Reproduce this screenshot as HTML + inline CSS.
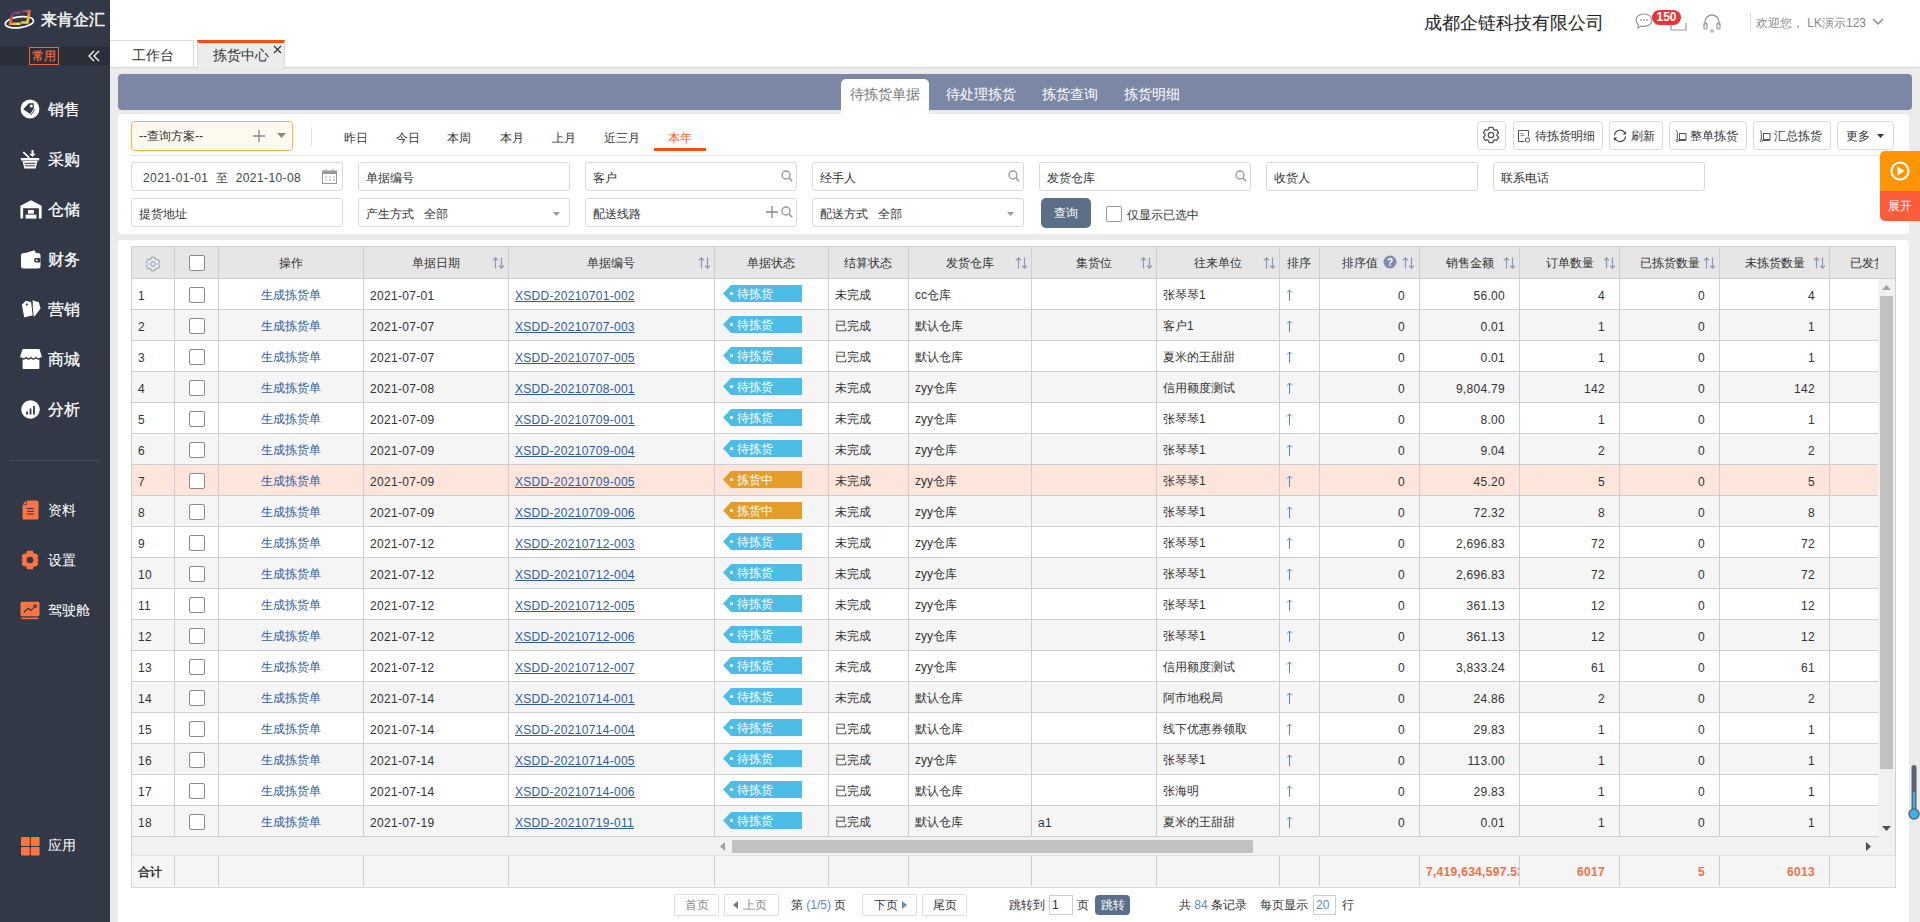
<!DOCTYPE html>
<html><head><meta charset="utf-8"><style>
*{box-sizing:border-box;margin:0;padding:0}
html,body{width:1920px;height:922px;overflow:hidden;background:#ebebeb;font-family:"Liberation Sans",sans-serif;font-size:12px;color:#333}
.a{position:absolute}
#side{position:absolute;left:0;top:0;width:110px;height:922px;background:#323846}
#top{position:absolute;left:110px;top:0;width:1810px;height:40px;background:#fff}
#tabs{position:absolute;left:110px;top:40px;width:1810px;height:28px;background:#fff;border-bottom:1px solid #d4d4d4}
.mi{position:absolute;left:0;width:110px;color:#fff;font-size:16px;-webkit-text-stroke:0.25px #fff}
.mi svg{position:absolute}
.mi span{position:absolute;left:48px}
.mi2{position:absolute;left:0;width:110px;color:#fff;font-size:14px}
.mi2 span{position:absolute;left:48px}
.inp{position:absolute;height:29px;width:212px;border:1px solid #d9d9d9;border-radius:3px;background:#fff;font-size:12px;color:#333;line-height:30px;padding-left:7px;white-space:nowrap}
.btn{position:absolute;top:121px;height:29px;border:1px solid #d9d9d9;border-radius:4px;background:#fff;font-size:12px;line-height:29px;color:#333;white-space:nowrap}
.dt{position:absolute;top:130px;font-size:12px;color:#333}
.cell{position:absolute;overflow:hidden;white-space:nowrap}
.L{letter-spacing:0.3px}
.hl{position:absolute;background:#d6d6d6}
.si{position:absolute}
.badge{position:absolute;height:16px;color:#fff;font-size:12px;line-height:16px}
</style></head><body>

<div id="side">
<div class="a" style="left:41px;top:10px;color:#eee;font-size:16px;font-weight:bold;white-space:nowrap">来肯企汇</div>
<svg class="a" style="left:0;top:0" width="40" height="40" viewBox="0 0 40 40"><defs><linearGradient id="g1" x1="0" y1="0" x2="0.6" y2="1"><stop offset="0" stop-color="#3b2c8c"/><stop offset="0.65" stop-color="#f06a3c"/><stop offset="1" stop-color="#f7d82c"/></linearGradient><linearGradient id="g2" x1="0" y1="0" x2="0.5" y2="1"><stop offset="0" stop-color="#3b2c8c"/><stop offset="0.45" stop-color="#f26d3a"/><stop offset="1" stop-color="#f7cf2c"/></linearGradient></defs><ellipse cx="19.4" cy="22.3" rx="14.2" ry="5.4" fill="none" stroke="#fff" stroke-width="1.7" transform="rotate(-7 19.4 22.3)"/><path d="M19.8 12.6H12.6L10.2 23.8H20.6" fill="none" stroke="url(#g1)" stroke-width="2.6"/><path d="M19.4 11H29.4L27.4 22.5H21" fill="none" stroke="url(#g2)" stroke-width="2.6"/></svg>
<div class="a" style="left:0;top:47px;width:110px;height:18px;background:#2a2f3a"></div>
<div class="a" style="left:29px;top:47px;width:30px;height:18px;border:1px solid #f0643c;color:#f86a3c;font-size:12px;line-height:16px;text-align:center;-webkit-text-stroke:0.2px #f86a3c">常用</div>
<svg class="a" style="left:88px;top:50px" width="12" height="12" viewBox="0 0 12 12"><path d="M6 1L1 6l5 5M11 1L6 6l5 5" stroke="#fff" stroke-width="1.3" fill="none"/></svg>
<div class="mi" style="top:99px;height:22px"><span style="top:0;line-height:22px">销售</span></div>
<div class="mi" style="top:149px;height:22px"><span style="top:0;line-height:22px">采购</span></div>
<div class="mi" style="top:199px;height:22px"><span style="top:0;line-height:22px">仓储</span></div>
<div class="mi" style="top:249px;height:22px"><span style="top:0;line-height:22px">财务</span></div>
<div class="mi" style="top:299px;height:22px"><span style="top:0;line-height:22px">营销</span></div>
<div class="mi" style="top:349px;height:22px"><span style="top:0;line-height:22px">商城</span></div>
<div class="mi" style="top:399px;height:22px"><span style="top:0;line-height:22px">分析</span></div>
<svg class="a" style="left:20px;top:99px" width="20" height="20" viewBox="0 0 20 20"><circle cx="10" cy="10" r="9.4" fill="#fff"/><path d="M3.2 10.2L8.9 4.2H13.6L13.9 9.5L10.2 14.9z" fill="#323846"/><circle cx="11.3" cy="6.9" r="1.5" fill="#fff"/><path d="M14.9 10.4L11 16" stroke="#323846" stroke-width="0.9"/></svg>
<svg class="a" style="left:20px;top:150px" width="20" height="19" viewBox="0 0 20 19"><path d="M12.5 0v4.5" stroke="#fff" stroke-width="2"/><path d="M9.3 3.8h6.4L12.5 7z" fill="#fff"/><path d="M3.3 2.2L9.3 7.8" stroke="#fff" stroke-width="1.8"/><rect x="0.8" y="8" width="18.4" height="2.4" rx=".6" fill="#fff"/><path d="M2.5 11H17.5L15.6 18.4H4.4z" fill="#fff"/><path d="M4.5 13.3h11M5 15.8h10" stroke="#323846" stroke-width="1"/></svg>
<svg class="a" style="left:20px;top:200px" width="22" height="19" viewBox="0 0 22 19"><path d="M11 .3L21.6 5.8V18.6H18.9V8.2H3.1V18.6H.4V5.8z" fill="#fff"/><rect x="8" y="10" width="6" height="3.6" fill="#fff"/><rect x="5.6" y="14.6" width="10.8" height="4" fill="#fff"/></svg>
<svg class="a" style="left:21px;top:250px" width="20" height="19" viewBox="0 0 20 19"><path d="M3.5 3.2L13.5 .3 15 3.2z" fill="#fff"/><rect x="0" y="3" width="19.5" height="15.5" rx="2.5" fill="#fff"/><rect x="13.2" y="8" width="6.3" height="4.6" rx="1.5" fill="#323846"/><circle cx="15.6" cy="10.3" r="1" fill="#fff"/></svg>
<svg class="a" style="left:21px;top:299px" width="20" height="20" viewBox="0 0 20 20"><path d="M11.5 1.2L17.8 3.2 19.6 9.4 13.4 17.6 10.6 16.6 11.8 3z" fill="#fff"/><path d="M4.6 1.4L10.6 2.6 12.2 16.8 2.8 19 .4 5.8z" fill="#fff" stroke="#323846" stroke-width="1"/><circle cx="5.8" cy="5.6" r="1.1" fill="#323846"/></svg>
<svg class="a" style="left:20px;top:349px" width="22" height="20" viewBox="0 0 22 20"><path d="M2.6 0H19.4L21.6 6.8V9H.4V6.8z" fill="#fff"/><rect x="2.6" y="9" width="16.8" height="11" rx="1" fill="#fff"/><path d="M.8 8.6Q3.5 11.4 6.2 8.6Q8.6 11.4 11 8.6Q13.4 11.4 15.8 8.6Q18.5 11.4 21.2 8.6" fill="none" stroke="#323846" stroke-width="1.4"/></svg>
<svg class="a" style="left:21px;top:400px" width="19" height="19" viewBox="0 0 19 19"><circle cx="9.5" cy="9.5" r="9.3" fill="#fff"/><path d="M6 14.6V11.6M9.5 14.6V8.6M13 14.6V6" stroke="#323846" stroke-width="1.8"/></svg>
<div class="a" style="left:10px;top:460px;width:90px;height:1px;background:#454c5a"></div>
<div class="mi2" style="top:500px;height:20px"><span style="top:0;line-height:20px">资料</span></div>
<div class="mi2" style="top:550px;height:20px"><span style="top:0;line-height:20px">设置</span></div>
<div class="mi2" style="top:600px;height:20px"><span style="top:0;line-height:20px">驾驶舱</span></div>
<svg class="a" style="left:22px;top:500px" width="17" height="20" viewBox="0 0 17 20"><path d="M4.5 .5H15A1.5 1.5 0 0 1 16.5 2V18A1.5 1.5 0 0 1 15 19.5H2A1.5 1.5 0 0 1 .5 18V4.5z" fill="#fd7443"/><path d="M4.6 .3V4.6H.3" fill="none" stroke="#323846" stroke-width=".8"/><path d="M5 8.5h7M5 11.3h7M5 14h7" stroke="#323846" stroke-width="1"/></svg>
<svg class="a" style="left:20px;top:550px" width="20" height="20" viewBox="0 0 20 20"><path d="M7.2 .8h5.6l1 2.6 2.7.4 1.9 2.2-1 2.6L19 10l-1.6 1.4 1 2.6-1.9 2.2-2.7.4-1 2.6H7.2l-1-2.6-2.7-.4-1.9-2.2 1-2.6L1 10l1.6-1.4-1-2.6 1.9-2.2 2.7-.4z" fill="#fd7443"/><circle cx="10" cy="10" r="3.3" fill="#323846"/></svg>
<svg class="a" style="left:20px;top:601px" width="20" height="19" viewBox="0 0 20 19"><rect x=".5" y=".8" width="19" height="14.4" rx="1.5" fill="#fd7443"/><path d="M3.8 11.2l4.4-4 2.6 2.2 4.6-4.6" fill="none" stroke="#323846" stroke-width="1.2"/><path d="M13.4 4.4h2.6V7" fill="none" stroke="#323846" stroke-width="1.2"/><rect x="1.5" y="16.6" width="17" height="1.6" fill="#fd7443"/></svg>
<div class="mi2" style="top:835px;height:20px"><span style="top:0;line-height:20px">应用</span></div>
<svg class="a" style="left:21px;top:837px" width="19" height="19" viewBox="0 0 19 19"><rect x="0" y="0" width="8.8" height="9" rx="1" fill="#fd7443"/><rect x="9.8" y="0" width="8.8" height="9" rx="1" fill="#fd7443"/><rect x="0" y="10" width="8.8" height="8.4" rx="1" fill="#fd7443"/><rect x="9.8" y="10" width="8.8" height="8.4" rx="1" fill="#fd7443"/></svg>
</div>
<div id="top"></div>
<div class="a" style="left:1424px;top:11px;font-size:18px;color:#222">成都企链科技有限公司</div>
<svg class="a" style="left:1635px;top:13px" width="18" height="16" viewBox="0 0 18 16"><path d="M9 1C4.5 1 1 3.8 1 7.2c0 1.8 1 3.4 2.5 4.5L3 15l3.5-2c.8.2 1.6.3 2.5.3 4.5 0 8-2.8 8-6.1S13.5 1 9 1z" fill="none" stroke="#999" stroke-width="1.2"/><circle cx="6" cy="7" r=".9" fill="#999"/><circle cx="9" cy="7" r=".9" fill="#999"/><circle cx="12" cy="7" r=".9" fill="#999"/></svg>
<svg class="a" style="left:1670px;top:17px" width="17" height="14" viewBox="0 0 17 14"><path d="M1 6v7h15V6" fill="none" stroke="#999" stroke-width="1.2"/></svg>
<div class="a" style="left:1652px;top:10px;width:29px;height:15px;border-radius:8px;background:#e8333a;color:#fff;font-size:12px;font-weight:bold;line-height:15px;text-align:center">150</div>
<svg class="a" style="left:1702px;top:13px" width="20" height="20" viewBox="0 0 20 20"><path d="M3 12V9a7 7 0 0 1 14 0v3" fill="none" stroke="#999" stroke-width="1.3"/><rect x="2" y="10" width="3" height="6" rx="1" fill="none" stroke="#999" stroke-width="1.2"/><rect x="15" y="10" width="3" height="6" rx="1" fill="none" stroke="#999" stroke-width="1.2"/><circle cx="10" cy="18" r="1.3" fill="none" stroke="#999"/></svg>
<div class="a" style="left:1750px;top:13px;width:1px;height:18px;background:#ddd"></div>
<div class="a" style="left:1756px;top:15px;font-size:12px;color:#888;white-space:nowrap">欢迎您，&nbsp;LK演示123</div>
<svg class="a" style="left:1872px;top:18px" width="12" height="8" viewBox="0 0 12 8"><path d="M1 1l5 5 5-5" stroke="#888" stroke-width="1.5" fill="none"/></svg>
<div id="tabs"></div>
<div class="a" style="left:110px;top:40px;width:84px;height:27px;background:#fff;border:1px solid #dcdcdc;border-left:none;border-bottom:none;font-size:14px;color:#333;text-align:center;line-height:29px;padding-left:2px">工作台</div>
<div class="a" style="left:197px;top:40px;width:88px;height:29px;background:#ececec;border-top:3px solid #fe4c16;border-right:1px solid #dcdcdc;border-left:1px solid #dcdcdc;font-size:14px;color:#333;line-height:25px;padding-left:15px">拣货中心</div>
<svg class="a" style="left:273px;top:45px" width="9" height="9" viewBox="0 0 9 9"><path d="M1 1l7 7M8 1L1 8" stroke="#333" stroke-width="1.2"/></svg>
<div class="a" style="left:118px;top:74px;width:1794px;height:36px;background:#7c87a5;border-radius:4px"></div>
<div class="a" style="left:841px;top:79px;width:88px;height:35px;background:#fff;border-radius:5px 5px 0 0;color:#777;font-size:14px;line-height:31px;text-align:center">待拣货单据</div>
<div class="a" style="left:946px;top:79px;color:#fff;font-size:14px;line-height:31px">待处理拣货</div>
<div class="a" style="left:1042px;top:79px;color:#fff;font-size:14px;line-height:31px">拣货查询</div>
<div class="a" style="left:1124px;top:79px;color:#fff;font-size:14px;line-height:31px">拣货明细</div>
<div class="a" style="left:118px;top:114px;width:1791px;height:120px;background:#fff;border-radius:4px"></div>
<div class="a" style="left:131px;top:121px;width:162px;height:30px;background:#fffaf0;border:1px solid #f6b24f;border-radius:4px;font-size:12px;color:#333;line-height:28px;padding-left:7px">--查询方案--</div>
<svg class="a" style="left:253px;top:130px" width="12" height="12" viewBox="0 0 12 12"><path d="M6 0v12M0 6h12" stroke="#888" stroke-width="1.3"/></svg>
<svg class="a" style="left:277px;top:133px" width="9" height="5" viewBox="0 0 9 5"><path d="M0 0h9L4.5 5z" fill="#888"/></svg>
<div class="a" style="left:311px;top:127px;width:1px;height:19px;background:#e3e3e3"></div>
<div class="a" style="left:131px;top:155px;width:1764px;height:1px;background:#e8e8e8"></div>
<div class="dt" style="left:344px">昨日</div>
<div class="dt" style="left:396px">今日</div>
<div class="dt" style="left:447px">本周</div>
<div class="dt" style="left:500px">本月</div>
<div class="dt" style="left:552px">上月</div>
<div class="dt" style="left:604px">近三月</div>
<div class="dt" style="left:668px;color:#fe5a25">本年</div>
<div class="a" style="left:654px;top:148px;width:52px;height:3px;background:#fe4c16"></div>
<div class="btn" style="left:1477px;width:29px"></div>
<svg class="a" style="left:1482px;top:126px" width="18" height="18" viewBox="0 0 24 24"><path d="M8.75 4.69 L9.46 1.81 L14.54 1.81 L15.25 4.69 L16.70 5.53 L19.55 4.71 L22.09 9.11 L19.96 11.16 L19.96 12.84 L22.09 14.89 L19.55 19.29 L16.70 18.47 L15.25 19.31 L14.54 22.19 L9.46 22.19 L8.75 19.31 L7.30 18.47 L4.45 19.29 L1.91 14.89 L4.04 12.84 L4.04 11.16 L1.91 9.11 L4.45 4.71 L7.30 5.53Z" fill="none" stroke="#555" stroke-width="1.7" stroke-linejoin="round"/><circle cx="12" cy="12" r="3.6" fill="none" stroke="#555" stroke-width="1.7"/></svg>
<div class="btn" style="left:1513px;width:90px;padding-left:21px">待拣货明细</div>
<svg class="a" style="left:1517px;top:129px" width="14" height="14" viewBox="0 0 14 14"><path d="M7.5 12.5H1.5V1.5h10v6" fill="none" stroke="#555" stroke-width="1"/><path d="M3.5 4.5h3M3.5 6.5h4" stroke="#777" stroke-width=".9"/><circle cx="10.5" cy="11" r="2.2" fill="none" stroke="#555" stroke-width="1"/></svg>
<div class="btn" style="left:1609px;width:54px;padding-left:21px">刷新</div>
<svg class="a" style="left:1613px;top:129px" width="14" height="14" viewBox="0 0 14 14"><path d="M1.5 6.6A5.6 5.6 0 0 1 11.8 3.8M12.5 7.2A5.6 5.6 0 0 1 2.2 10" fill="none" stroke="#444" stroke-width="1.15"/><path d="M13.1 1.9V5.4H9.6z M.9 12.1V8.6H4.4z" fill="#444"/></svg>
<div class="btn" style="left:1669px;width:78px;padding-left:20px">整单拣货</div>
<svg class="a" style="left:1675px;top:129px" width="13" height="13" viewBox="0 0 13 13"><path d="M.8 1.2Q2.3 2 2.3 3.5V11.5h8.5" fill="none" stroke="#555" stroke-width="1"/><circle cx="2.3" cy="11.6" r="1.1" fill="#fff" stroke="#555" stroke-width=".9"/><rect x="4.5" y="4.5" width="6.5" height="6" fill="none" stroke="#555" stroke-width="1"/></svg>
<div class="btn" style="left:1753px;width:78px;padding-left:20px">汇总拣货</div>
<svg class="a" style="left:1759px;top:129px" width="13" height="13" viewBox="0 0 13 13"><path d="M.8 1.2Q2.3 2 2.3 3.5V11.5h8.5" fill="none" stroke="#555" stroke-width="1"/><circle cx="2.3" cy="11.6" r="1.1" fill="#fff" stroke="#555" stroke-width=".9"/><rect x="4.5" y="4.5" width="6.5" height="6" fill="none" stroke="#555" stroke-width="1"/></svg>
<div class="btn" style="left:1837px;width:57px;padding-left:8px">更多</div>
<svg class="a" style="left:1877px;top:134px" width="7" height="4" viewBox="0 0 7 4"><path d="M0 0h7L3.5 4z" fill="#333"/></svg>
<div class="inp" style="left:131px;top:162px;padding-left:11px;color:#444;letter-spacing:0.4px">2021-01-01&nbsp; 至&nbsp; 2021-10-08</div>
<svg class="a" style="left:322px;top:169px" width="15" height="15" viewBox="0 0 15 15"><rect x=".5" y="2" width="14" height="12.5" fill="none" stroke="#999"/><rect x=".5" y="2" width="14" height="3" fill="#999"/><path d="M4 0v3M11 0v3" stroke="#999"/><path d="M3 8h2M7 8h2M11 8h2M3 11h2M7 11h2M11 11h2" stroke="#aaa"/></svg>
<div class="inp" style="left:358px;top:162px">单据编号</div>
<div class="inp" style="left:585px;top:162px">客户</div>
<svg class="a" style="left:781px;top:170px" width="12" height="12" viewBox="0 0 12 12"><circle cx="5" cy="5" r="4" fill="none" stroke="#999" stroke-width="1.4"/><path d="M8 8l3.2 3.2" stroke="#999" stroke-width="1.6"/></svg>
<div class="inp" style="left:812px;top:162px">经手人</div>
<svg class="a" style="left:1008px;top:170px" width="12" height="12" viewBox="0 0 12 12"><circle cx="5" cy="5" r="4" fill="none" stroke="#999" stroke-width="1.4"/><path d="M8 8l3.2 3.2" stroke="#999" stroke-width="1.6"/></svg>
<div class="inp" style="left:1039px;top:162px">发货仓库</div>
<svg class="a" style="left:1235px;top:170px" width="12" height="12" viewBox="0 0 12 12"><circle cx="5" cy="5" r="4" fill="none" stroke="#999" stroke-width="1.4"/><path d="M8 8l3.2 3.2" stroke="#999" stroke-width="1.6"/></svg>
<div class="inp" style="left:1266px;top:162px">收货人</div>
<div class="inp" style="left:1493px;top:162px">联系电话</div>
<div class="inp" style="left:131px;top:198px">提货地址</div>
<div class="inp" style="left:358px;top:198px">产生方式&nbsp;&nbsp; 全部</div>
<svg class="a" style="left:553px;top:212px" width="7" height="4" viewBox="0 0 7 4"><path d="M0 0h7L3.5 4z" fill="#999"/></svg>
<div class="inp" style="left:585px;top:198px">配送线路</div>
<svg class="a" style="left:766px;top:206px" width="12" height="12" viewBox="0 0 12 12"><path d="M6 0v12M0 6h12" stroke="#888" stroke-width="1.3"/></svg>
<svg class="a" style="left:781px;top:206px" width="12" height="12" viewBox="0 0 12 12"><circle cx="5" cy="5" r="4" fill="none" stroke="#999" stroke-width="1.4"/><path d="M8 8l3.2 3.2" stroke="#999" stroke-width="1.6"/></svg>
<div class="inp" style="left:812px;top:198px">配送方式&nbsp;&nbsp; 全部</div>
<svg class="a" style="left:1007px;top:212px" width="7" height="4" viewBox="0 0 7 4"><path d="M0 0h7L3.5 4z" fill="#999"/></svg>
<div class="a" style="left:1041px;top:198px;width:50px;height:30px;background:#5b7088;border-radius:5px;color:#fff;font-size:12px;line-height:30px;text-align:center">查询</div>
<div class="a" style="left:1106px;top:206px;width:16px;height:16px;border:1px solid #999;border-radius:2px;background:#fff"></div>
<div class="a" style="left:1127px;top:207px;font-size:12px;color:#333">仅显示已选中</div>
<div class="a" style="left:1880px;top:151px;width:40px;height:40px;background:#ff9406;border-radius:5px 0 0 0"></div>
<div class="a" style="left:1880px;top:191px;width:40px;height:30px;background:#fb5c3c;border-radius:0 0 0 5px;color:#fff;font-size:12px;line-height:30px;text-align:center;padding-left:0px">展开</div>
<svg class="a" style="left:1890px;top:161px" width="20" height="20" viewBox="0 0 20 20"><circle cx="10" cy="10" r="8.5" fill="none" stroke="#fff" stroke-width="2"/><path d="M7.5 5.5v9l7-4.5z" fill="#fff"/></svg>
<div class="a" style="left:118px;top:240px;width:1791px;height:682px;background:#fff;border-radius:4px 4px 0 0"></div>
<div class="a" style="left:131px;top:246px;width:1765px;height:33px;background:#e6e6e6;border:1px solid #cfcfcf"></div>
<div class="a" style="left:131px;top:279px;width:1747px;height:558px;overflow:hidden">
<div class="a" style="left:0;top:0px;width:1800px;height:31px;background:#fff;border-bottom:1px solid #cfcfcf"></div>
<div class="cell L" style="left:7px;top:10px">1</div>
<div class="a" style="left:58px;top:8px;width:16px;height:16px;border:1px solid #8a8a8a;border-radius:2px;background:#fff"></div>
<div class="cell" style="left:130px;top:8px;color:#2f5d9e">生成拣货单</div>
<div class="cell L" style="left:239px;top:10px">2021-07-01</div>
<div class="cell L" style="left:384px;top:10px;color:#2f5d9e;text-decoration:underline">XSDD-20210701-002</div>
<svg class="a" style="left:592px;top:6px" width="79" height="17" viewBox="0 0 79 17"><path d="M8 0H79V17H8L0 8.5z" fill="#4dbde6"/><circle cx="8.5" cy="8.5" r="1.6" fill="#fff"/></svg>
<div class="cell" style="left:606px;top:7px;color:#fff">待拣货</div>
<div class="cell" style="left:704px;top:8px">未完成</div>
<div class="cell" style="left:784px;top:8px">cc仓库</div>
<div class="cell" style="left:1032px;top:8px">张琴琴1</div>
<svg class="a" style="left:1155px;top:10px" width="7" height="13" viewBox="0 0 7 13"><path d="M3.5 12V1M1 3.5L3.5 1 6 3.5" stroke="#5a82bb" stroke-width="1" fill="none"/></svg>
<div class="cell L" style="left:1188px;top:10px;width:100px;text-align:right;padding-right:14px">0</div>
<div class="cell L" style="left:1288px;top:10px;width:100px;text-align:right;padding-right:14px">56.00</div>
<div class="cell L" style="left:1388px;top:10px;width:100px;text-align:right;padding-right:14px">4</div>
<div class="cell L" style="left:1488px;top:10px;width:100px;text-align:right;padding-right:14px">0</div>
<div class="cell L" style="left:1588px;top:10px;width:110px;text-align:right;padding-right:14px">4</div>
<div class="a" style="left:0;top:31px;width:1800px;height:31px;background:#f5f5f5;border-bottom:1px solid #cfcfcf"></div>
<div class="cell L" style="left:7px;top:41px">2</div>
<div class="a" style="left:58px;top:39px;width:16px;height:16px;border:1px solid #8a8a8a;border-radius:2px;background:#fff"></div>
<div class="cell" style="left:130px;top:39px;color:#2f5d9e">生成拣货单</div>
<div class="cell L" style="left:239px;top:41px">2021-07-07</div>
<div class="cell L" style="left:384px;top:41px;color:#2f5d9e;text-decoration:underline">XSDD-20210707-003</div>
<svg class="a" style="left:592px;top:37px" width="79" height="17" viewBox="0 0 79 17"><path d="M8 0H79V17H8L0 8.5z" fill="#4dbde6"/><circle cx="8.5" cy="8.5" r="1.6" fill="#fff"/></svg>
<div class="cell" style="left:606px;top:38px;color:#fff">待拣货</div>
<div class="cell" style="left:704px;top:39px">已完成</div>
<div class="cell" style="left:784px;top:39px">默认仓库</div>
<div class="cell" style="left:1032px;top:39px">客户1</div>
<svg class="a" style="left:1155px;top:41px" width="7" height="13" viewBox="0 0 7 13"><path d="M3.5 12V1M1 3.5L3.5 1 6 3.5" stroke="#5a82bb" stroke-width="1" fill="none"/></svg>
<div class="cell L" style="left:1188px;top:41px;width:100px;text-align:right;padding-right:14px">0</div>
<div class="cell L" style="left:1288px;top:41px;width:100px;text-align:right;padding-right:14px">0.01</div>
<div class="cell L" style="left:1388px;top:41px;width:100px;text-align:right;padding-right:14px">1</div>
<div class="cell L" style="left:1488px;top:41px;width:100px;text-align:right;padding-right:14px">0</div>
<div class="cell L" style="left:1588px;top:41px;width:110px;text-align:right;padding-right:14px">1</div>
<div class="a" style="left:0;top:62px;width:1800px;height:31px;background:#fff;border-bottom:1px solid #cfcfcf"></div>
<div class="cell L" style="left:7px;top:72px">3</div>
<div class="a" style="left:58px;top:70px;width:16px;height:16px;border:1px solid #8a8a8a;border-radius:2px;background:#fff"></div>
<div class="cell" style="left:130px;top:70px;color:#2f5d9e">生成拣货单</div>
<div class="cell L" style="left:239px;top:72px">2021-07-07</div>
<div class="cell L" style="left:384px;top:72px;color:#2f5d9e;text-decoration:underline">XSDD-20210707-005</div>
<svg class="a" style="left:592px;top:68px" width="79" height="17" viewBox="0 0 79 17"><path d="M8 0H79V17H8L0 8.5z" fill="#4dbde6"/><circle cx="8.5" cy="8.5" r="1.6" fill="#fff"/></svg>
<div class="cell" style="left:606px;top:69px;color:#fff">待拣货</div>
<div class="cell" style="left:704px;top:70px">已完成</div>
<div class="cell" style="left:784px;top:70px">默认仓库</div>
<div class="cell" style="left:1032px;top:70px">夏米的王甜甜</div>
<svg class="a" style="left:1155px;top:72px" width="7" height="13" viewBox="0 0 7 13"><path d="M3.5 12V1M1 3.5L3.5 1 6 3.5" stroke="#5a82bb" stroke-width="1" fill="none"/></svg>
<div class="cell L" style="left:1188px;top:72px;width:100px;text-align:right;padding-right:14px">0</div>
<div class="cell L" style="left:1288px;top:72px;width:100px;text-align:right;padding-right:14px">0.01</div>
<div class="cell L" style="left:1388px;top:72px;width:100px;text-align:right;padding-right:14px">1</div>
<div class="cell L" style="left:1488px;top:72px;width:100px;text-align:right;padding-right:14px">0</div>
<div class="cell L" style="left:1588px;top:72px;width:110px;text-align:right;padding-right:14px">1</div>
<div class="a" style="left:0;top:93px;width:1800px;height:31px;background:#f5f5f5;border-bottom:1px solid #cfcfcf"></div>
<div class="cell L" style="left:7px;top:103px">4</div>
<div class="a" style="left:58px;top:101px;width:16px;height:16px;border:1px solid #8a8a8a;border-radius:2px;background:#fff"></div>
<div class="cell" style="left:130px;top:101px;color:#2f5d9e">生成拣货单</div>
<div class="cell L" style="left:239px;top:103px">2021-07-08</div>
<div class="cell L" style="left:384px;top:103px;color:#2f5d9e;text-decoration:underline">XSDD-20210708-001</div>
<svg class="a" style="left:592px;top:99px" width="79" height="17" viewBox="0 0 79 17"><path d="M8 0H79V17H8L0 8.5z" fill="#4dbde6"/><circle cx="8.5" cy="8.5" r="1.6" fill="#fff"/></svg>
<div class="cell" style="left:606px;top:100px;color:#fff">待拣货</div>
<div class="cell" style="left:704px;top:101px">未完成</div>
<div class="cell" style="left:784px;top:101px">zyy仓库</div>
<div class="cell" style="left:1032px;top:101px">信用额度测试</div>
<svg class="a" style="left:1155px;top:103px" width="7" height="13" viewBox="0 0 7 13"><path d="M3.5 12V1M1 3.5L3.5 1 6 3.5" stroke="#5a82bb" stroke-width="1" fill="none"/></svg>
<div class="cell L" style="left:1188px;top:103px;width:100px;text-align:right;padding-right:14px">0</div>
<div class="cell L" style="left:1288px;top:103px;width:100px;text-align:right;padding-right:14px">9,804.79</div>
<div class="cell L" style="left:1388px;top:103px;width:100px;text-align:right;padding-right:14px">142</div>
<div class="cell L" style="left:1488px;top:103px;width:100px;text-align:right;padding-right:14px">0</div>
<div class="cell L" style="left:1588px;top:103px;width:110px;text-align:right;padding-right:14px">142</div>
<div class="a" style="left:0;top:124px;width:1800px;height:31px;background:#fff;border-bottom:1px solid #cfcfcf"></div>
<div class="cell L" style="left:7px;top:134px">5</div>
<div class="a" style="left:58px;top:132px;width:16px;height:16px;border:1px solid #8a8a8a;border-radius:2px;background:#fff"></div>
<div class="cell" style="left:130px;top:132px;color:#2f5d9e">生成拣货单</div>
<div class="cell L" style="left:239px;top:134px">2021-07-09</div>
<div class="cell L" style="left:384px;top:134px;color:#2f5d9e;text-decoration:underline">XSDD-20210709-001</div>
<svg class="a" style="left:592px;top:130px" width="79" height="17" viewBox="0 0 79 17"><path d="M8 0H79V17H8L0 8.5z" fill="#4dbde6"/><circle cx="8.5" cy="8.5" r="1.6" fill="#fff"/></svg>
<div class="cell" style="left:606px;top:131px;color:#fff">待拣货</div>
<div class="cell" style="left:704px;top:132px">未完成</div>
<div class="cell" style="left:784px;top:132px">zyy仓库</div>
<div class="cell" style="left:1032px;top:132px">张琴琴1</div>
<svg class="a" style="left:1155px;top:134px" width="7" height="13" viewBox="0 0 7 13"><path d="M3.5 12V1M1 3.5L3.5 1 6 3.5" stroke="#5a82bb" stroke-width="1" fill="none"/></svg>
<div class="cell L" style="left:1188px;top:134px;width:100px;text-align:right;padding-right:14px">0</div>
<div class="cell L" style="left:1288px;top:134px;width:100px;text-align:right;padding-right:14px">8.00</div>
<div class="cell L" style="left:1388px;top:134px;width:100px;text-align:right;padding-right:14px">1</div>
<div class="cell L" style="left:1488px;top:134px;width:100px;text-align:right;padding-right:14px">0</div>
<div class="cell L" style="left:1588px;top:134px;width:110px;text-align:right;padding-right:14px">1</div>
<div class="a" style="left:0;top:155px;width:1800px;height:31px;background:#f5f5f5;border-bottom:1px solid #cfcfcf"></div>
<div class="cell L" style="left:7px;top:165px">6</div>
<div class="a" style="left:58px;top:163px;width:16px;height:16px;border:1px solid #8a8a8a;border-radius:2px;background:#fff"></div>
<div class="cell" style="left:130px;top:163px;color:#2f5d9e">生成拣货单</div>
<div class="cell L" style="left:239px;top:165px">2021-07-09</div>
<div class="cell L" style="left:384px;top:165px;color:#2f5d9e;text-decoration:underline">XSDD-20210709-004</div>
<svg class="a" style="left:592px;top:161px" width="79" height="17" viewBox="0 0 79 17"><path d="M8 0H79V17H8L0 8.5z" fill="#4dbde6"/><circle cx="8.5" cy="8.5" r="1.6" fill="#fff"/></svg>
<div class="cell" style="left:606px;top:162px;color:#fff">待拣货</div>
<div class="cell" style="left:704px;top:163px">未完成</div>
<div class="cell" style="left:784px;top:163px">zyy仓库</div>
<div class="cell" style="left:1032px;top:163px">张琴琴1</div>
<svg class="a" style="left:1155px;top:165px" width="7" height="13" viewBox="0 0 7 13"><path d="M3.5 12V1M1 3.5L3.5 1 6 3.5" stroke="#5a82bb" stroke-width="1" fill="none"/></svg>
<div class="cell L" style="left:1188px;top:165px;width:100px;text-align:right;padding-right:14px">0</div>
<div class="cell L" style="left:1288px;top:165px;width:100px;text-align:right;padding-right:14px">9.04</div>
<div class="cell L" style="left:1388px;top:165px;width:100px;text-align:right;padding-right:14px">2</div>
<div class="cell L" style="left:1488px;top:165px;width:100px;text-align:right;padding-right:14px">0</div>
<div class="cell L" style="left:1588px;top:165px;width:110px;text-align:right;padding-right:14px">2</div>
<div class="a" style="left:0;top:186px;width:1800px;height:31px;background:#fde5dc;border-bottom:1px solid #cfcfcf"></div>
<div class="cell L" style="left:7px;top:196px">7</div>
<div class="a" style="left:58px;top:194px;width:16px;height:16px;border:1px solid #8a8a8a;border-radius:2px;background:#fff"></div>
<div class="cell" style="left:130px;top:194px;color:#2f5d9e">生成拣货单</div>
<div class="cell L" style="left:239px;top:196px">2021-07-09</div>
<div class="cell L" style="left:384px;top:196px;color:#2f5d9e;text-decoration:underline">XSDD-20210709-005</div>
<svg class="a" style="left:592px;top:192px" width="79" height="17" viewBox="0 0 79 17"><path d="M8 0H79V17H8L0 8.5z" fill="#e59d2a"/><circle cx="8.5" cy="8.5" r="1.6" fill="#fff"/></svg>
<div class="cell" style="left:606px;top:193px;color:#fff">拣货中</div>
<div class="cell" style="left:704px;top:194px">未完成</div>
<div class="cell" style="left:784px;top:194px">zyy仓库</div>
<div class="cell" style="left:1032px;top:194px">张琴琴1</div>
<svg class="a" style="left:1155px;top:196px" width="7" height="13" viewBox="0 0 7 13"><path d="M3.5 12V1M1 3.5L3.5 1 6 3.5" stroke="#5a82bb" stroke-width="1" fill="none"/></svg>
<div class="cell L" style="left:1188px;top:196px;width:100px;text-align:right;padding-right:14px">0</div>
<div class="cell L" style="left:1288px;top:196px;width:100px;text-align:right;padding-right:14px">45.20</div>
<div class="cell L" style="left:1388px;top:196px;width:100px;text-align:right;padding-right:14px">5</div>
<div class="cell L" style="left:1488px;top:196px;width:100px;text-align:right;padding-right:14px">0</div>
<div class="cell L" style="left:1588px;top:196px;width:110px;text-align:right;padding-right:14px">5</div>
<div class="a" style="left:0;top:217px;width:1800px;height:31px;background:#f5f5f5;border-bottom:1px solid #cfcfcf"></div>
<div class="cell L" style="left:7px;top:227px">8</div>
<div class="a" style="left:58px;top:225px;width:16px;height:16px;border:1px solid #8a8a8a;border-radius:2px;background:#fff"></div>
<div class="cell" style="left:130px;top:225px;color:#2f5d9e">生成拣货单</div>
<div class="cell L" style="left:239px;top:227px">2021-07-09</div>
<div class="cell L" style="left:384px;top:227px;color:#2f5d9e;text-decoration:underline">XSDD-20210709-006</div>
<svg class="a" style="left:592px;top:223px" width="79" height="17" viewBox="0 0 79 17"><path d="M8 0H79V17H8L0 8.5z" fill="#e59d2a"/><circle cx="8.5" cy="8.5" r="1.6" fill="#fff"/></svg>
<div class="cell" style="left:606px;top:224px;color:#fff">拣货中</div>
<div class="cell" style="left:704px;top:225px">未完成</div>
<div class="cell" style="left:784px;top:225px">zyy仓库</div>
<div class="cell" style="left:1032px;top:225px">张琴琴1</div>
<svg class="a" style="left:1155px;top:227px" width="7" height="13" viewBox="0 0 7 13"><path d="M3.5 12V1M1 3.5L3.5 1 6 3.5" stroke="#5a82bb" stroke-width="1" fill="none"/></svg>
<div class="cell L" style="left:1188px;top:227px;width:100px;text-align:right;padding-right:14px">0</div>
<div class="cell L" style="left:1288px;top:227px;width:100px;text-align:right;padding-right:14px">72.32</div>
<div class="cell L" style="left:1388px;top:227px;width:100px;text-align:right;padding-right:14px">8</div>
<div class="cell L" style="left:1488px;top:227px;width:100px;text-align:right;padding-right:14px">0</div>
<div class="cell L" style="left:1588px;top:227px;width:110px;text-align:right;padding-right:14px">8</div>
<div class="a" style="left:0;top:248px;width:1800px;height:31px;background:#fff;border-bottom:1px solid #cfcfcf"></div>
<div class="cell L" style="left:7px;top:258px">9</div>
<div class="a" style="left:58px;top:256px;width:16px;height:16px;border:1px solid #8a8a8a;border-radius:2px;background:#fff"></div>
<div class="cell" style="left:130px;top:256px;color:#2f5d9e">生成拣货单</div>
<div class="cell L" style="left:239px;top:258px">2021-07-12</div>
<div class="cell L" style="left:384px;top:258px;color:#2f5d9e;text-decoration:underline">XSDD-20210712-003</div>
<svg class="a" style="left:592px;top:254px" width="79" height="17" viewBox="0 0 79 17"><path d="M8 0H79V17H8L0 8.5z" fill="#4dbde6"/><circle cx="8.5" cy="8.5" r="1.6" fill="#fff"/></svg>
<div class="cell" style="left:606px;top:255px;color:#fff">待拣货</div>
<div class="cell" style="left:704px;top:256px">未完成</div>
<div class="cell" style="left:784px;top:256px">zyy仓库</div>
<div class="cell" style="left:1032px;top:256px">张琴琴1</div>
<svg class="a" style="left:1155px;top:258px" width="7" height="13" viewBox="0 0 7 13"><path d="M3.5 12V1M1 3.5L3.5 1 6 3.5" stroke="#5a82bb" stroke-width="1" fill="none"/></svg>
<div class="cell L" style="left:1188px;top:258px;width:100px;text-align:right;padding-right:14px">0</div>
<div class="cell L" style="left:1288px;top:258px;width:100px;text-align:right;padding-right:14px">2,696.83</div>
<div class="cell L" style="left:1388px;top:258px;width:100px;text-align:right;padding-right:14px">72</div>
<div class="cell L" style="left:1488px;top:258px;width:100px;text-align:right;padding-right:14px">0</div>
<div class="cell L" style="left:1588px;top:258px;width:110px;text-align:right;padding-right:14px">72</div>
<div class="a" style="left:0;top:279px;width:1800px;height:31px;background:#f5f5f5;border-bottom:1px solid #cfcfcf"></div>
<div class="cell L" style="left:7px;top:289px">10</div>
<div class="a" style="left:58px;top:287px;width:16px;height:16px;border:1px solid #8a8a8a;border-radius:2px;background:#fff"></div>
<div class="cell" style="left:130px;top:287px;color:#2f5d9e">生成拣货单</div>
<div class="cell L" style="left:239px;top:289px">2021-07-12</div>
<div class="cell L" style="left:384px;top:289px;color:#2f5d9e;text-decoration:underline">XSDD-20210712-004</div>
<svg class="a" style="left:592px;top:285px" width="79" height="17" viewBox="0 0 79 17"><path d="M8 0H79V17H8L0 8.5z" fill="#4dbde6"/><circle cx="8.5" cy="8.5" r="1.6" fill="#fff"/></svg>
<div class="cell" style="left:606px;top:286px;color:#fff">待拣货</div>
<div class="cell" style="left:704px;top:287px">未完成</div>
<div class="cell" style="left:784px;top:287px">zyy仓库</div>
<div class="cell" style="left:1032px;top:287px">张琴琴1</div>
<svg class="a" style="left:1155px;top:289px" width="7" height="13" viewBox="0 0 7 13"><path d="M3.5 12V1M1 3.5L3.5 1 6 3.5" stroke="#5a82bb" stroke-width="1" fill="none"/></svg>
<div class="cell L" style="left:1188px;top:289px;width:100px;text-align:right;padding-right:14px">0</div>
<div class="cell L" style="left:1288px;top:289px;width:100px;text-align:right;padding-right:14px">2,696.83</div>
<div class="cell L" style="left:1388px;top:289px;width:100px;text-align:right;padding-right:14px">72</div>
<div class="cell L" style="left:1488px;top:289px;width:100px;text-align:right;padding-right:14px">0</div>
<div class="cell L" style="left:1588px;top:289px;width:110px;text-align:right;padding-right:14px">72</div>
<div class="a" style="left:0;top:310px;width:1800px;height:31px;background:#fff;border-bottom:1px solid #cfcfcf"></div>
<div class="cell L" style="left:7px;top:320px">11</div>
<div class="a" style="left:58px;top:318px;width:16px;height:16px;border:1px solid #8a8a8a;border-radius:2px;background:#fff"></div>
<div class="cell" style="left:130px;top:318px;color:#2f5d9e">生成拣货单</div>
<div class="cell L" style="left:239px;top:320px">2021-07-12</div>
<div class="cell L" style="left:384px;top:320px;color:#2f5d9e;text-decoration:underline">XSDD-20210712-005</div>
<svg class="a" style="left:592px;top:316px" width="79" height="17" viewBox="0 0 79 17"><path d="M8 0H79V17H8L0 8.5z" fill="#4dbde6"/><circle cx="8.5" cy="8.5" r="1.6" fill="#fff"/></svg>
<div class="cell" style="left:606px;top:317px;color:#fff">待拣货</div>
<div class="cell" style="left:704px;top:318px">未完成</div>
<div class="cell" style="left:784px;top:318px">zyy仓库</div>
<div class="cell" style="left:1032px;top:318px">张琴琴1</div>
<svg class="a" style="left:1155px;top:320px" width="7" height="13" viewBox="0 0 7 13"><path d="M3.5 12V1M1 3.5L3.5 1 6 3.5" stroke="#5a82bb" stroke-width="1" fill="none"/></svg>
<div class="cell L" style="left:1188px;top:320px;width:100px;text-align:right;padding-right:14px">0</div>
<div class="cell L" style="left:1288px;top:320px;width:100px;text-align:right;padding-right:14px">361.13</div>
<div class="cell L" style="left:1388px;top:320px;width:100px;text-align:right;padding-right:14px">12</div>
<div class="cell L" style="left:1488px;top:320px;width:100px;text-align:right;padding-right:14px">0</div>
<div class="cell L" style="left:1588px;top:320px;width:110px;text-align:right;padding-right:14px">12</div>
<div class="a" style="left:0;top:341px;width:1800px;height:31px;background:#f5f5f5;border-bottom:1px solid #cfcfcf"></div>
<div class="cell L" style="left:7px;top:351px">12</div>
<div class="a" style="left:58px;top:349px;width:16px;height:16px;border:1px solid #8a8a8a;border-radius:2px;background:#fff"></div>
<div class="cell" style="left:130px;top:349px;color:#2f5d9e">生成拣货单</div>
<div class="cell L" style="left:239px;top:351px">2021-07-12</div>
<div class="cell L" style="left:384px;top:351px;color:#2f5d9e;text-decoration:underline">XSDD-20210712-006</div>
<svg class="a" style="left:592px;top:347px" width="79" height="17" viewBox="0 0 79 17"><path d="M8 0H79V17H8L0 8.5z" fill="#4dbde6"/><circle cx="8.5" cy="8.5" r="1.6" fill="#fff"/></svg>
<div class="cell" style="left:606px;top:348px;color:#fff">待拣货</div>
<div class="cell" style="left:704px;top:349px">未完成</div>
<div class="cell" style="left:784px;top:349px">zyy仓库</div>
<div class="cell" style="left:1032px;top:349px">张琴琴1</div>
<svg class="a" style="left:1155px;top:351px" width="7" height="13" viewBox="0 0 7 13"><path d="M3.5 12V1M1 3.5L3.5 1 6 3.5" stroke="#5a82bb" stroke-width="1" fill="none"/></svg>
<div class="cell L" style="left:1188px;top:351px;width:100px;text-align:right;padding-right:14px">0</div>
<div class="cell L" style="left:1288px;top:351px;width:100px;text-align:right;padding-right:14px">361.13</div>
<div class="cell L" style="left:1388px;top:351px;width:100px;text-align:right;padding-right:14px">12</div>
<div class="cell L" style="left:1488px;top:351px;width:100px;text-align:right;padding-right:14px">0</div>
<div class="cell L" style="left:1588px;top:351px;width:110px;text-align:right;padding-right:14px">12</div>
<div class="a" style="left:0;top:372px;width:1800px;height:31px;background:#fff;border-bottom:1px solid #cfcfcf"></div>
<div class="cell L" style="left:7px;top:382px">13</div>
<div class="a" style="left:58px;top:380px;width:16px;height:16px;border:1px solid #8a8a8a;border-radius:2px;background:#fff"></div>
<div class="cell" style="left:130px;top:380px;color:#2f5d9e">生成拣货单</div>
<div class="cell L" style="left:239px;top:382px">2021-07-12</div>
<div class="cell L" style="left:384px;top:382px;color:#2f5d9e;text-decoration:underline">XSDD-20210712-007</div>
<svg class="a" style="left:592px;top:378px" width="79" height="17" viewBox="0 0 79 17"><path d="M8 0H79V17H8L0 8.5z" fill="#4dbde6"/><circle cx="8.5" cy="8.5" r="1.6" fill="#fff"/></svg>
<div class="cell" style="left:606px;top:379px;color:#fff">待拣货</div>
<div class="cell" style="left:704px;top:380px">未完成</div>
<div class="cell" style="left:784px;top:380px">zyy仓库</div>
<div class="cell" style="left:1032px;top:380px">信用额度测试</div>
<svg class="a" style="left:1155px;top:382px" width="7" height="13" viewBox="0 0 7 13"><path d="M3.5 12V1M1 3.5L3.5 1 6 3.5" stroke="#5a82bb" stroke-width="1" fill="none"/></svg>
<div class="cell L" style="left:1188px;top:382px;width:100px;text-align:right;padding-right:14px">0</div>
<div class="cell L" style="left:1288px;top:382px;width:100px;text-align:right;padding-right:14px">3,833.24</div>
<div class="cell L" style="left:1388px;top:382px;width:100px;text-align:right;padding-right:14px">61</div>
<div class="cell L" style="left:1488px;top:382px;width:100px;text-align:right;padding-right:14px">0</div>
<div class="cell L" style="left:1588px;top:382px;width:110px;text-align:right;padding-right:14px">61</div>
<div class="a" style="left:0;top:403px;width:1800px;height:31px;background:#f5f5f5;border-bottom:1px solid #cfcfcf"></div>
<div class="cell L" style="left:7px;top:413px">14</div>
<div class="a" style="left:58px;top:411px;width:16px;height:16px;border:1px solid #8a8a8a;border-radius:2px;background:#fff"></div>
<div class="cell" style="left:130px;top:411px;color:#2f5d9e">生成拣货单</div>
<div class="cell L" style="left:239px;top:413px">2021-07-14</div>
<div class="cell L" style="left:384px;top:413px;color:#2f5d9e;text-decoration:underline">XSDD-20210714-001</div>
<svg class="a" style="left:592px;top:409px" width="79" height="17" viewBox="0 0 79 17"><path d="M8 0H79V17H8L0 8.5z" fill="#4dbde6"/><circle cx="8.5" cy="8.5" r="1.6" fill="#fff"/></svg>
<div class="cell" style="left:606px;top:410px;color:#fff">待拣货</div>
<div class="cell" style="left:704px;top:411px">未完成</div>
<div class="cell" style="left:784px;top:411px">默认仓库</div>
<div class="cell" style="left:1032px;top:411px">阿市地税局</div>
<svg class="a" style="left:1155px;top:413px" width="7" height="13" viewBox="0 0 7 13"><path d="M3.5 12V1M1 3.5L3.5 1 6 3.5" stroke="#5a82bb" stroke-width="1" fill="none"/></svg>
<div class="cell L" style="left:1188px;top:413px;width:100px;text-align:right;padding-right:14px">0</div>
<div class="cell L" style="left:1288px;top:413px;width:100px;text-align:right;padding-right:14px">24.86</div>
<div class="cell L" style="left:1388px;top:413px;width:100px;text-align:right;padding-right:14px">2</div>
<div class="cell L" style="left:1488px;top:413px;width:100px;text-align:right;padding-right:14px">0</div>
<div class="cell L" style="left:1588px;top:413px;width:110px;text-align:right;padding-right:14px">2</div>
<div class="a" style="left:0;top:434px;width:1800px;height:31px;background:#fff;border-bottom:1px solid #cfcfcf"></div>
<div class="cell L" style="left:7px;top:444px">15</div>
<div class="a" style="left:58px;top:442px;width:16px;height:16px;border:1px solid #8a8a8a;border-radius:2px;background:#fff"></div>
<div class="cell" style="left:130px;top:442px;color:#2f5d9e">生成拣货单</div>
<div class="cell L" style="left:239px;top:444px">2021-07-14</div>
<div class="cell L" style="left:384px;top:444px;color:#2f5d9e;text-decoration:underline">XSDD-20210714-004</div>
<svg class="a" style="left:592px;top:440px" width="79" height="17" viewBox="0 0 79 17"><path d="M8 0H79V17H8L0 8.5z" fill="#4dbde6"/><circle cx="8.5" cy="8.5" r="1.6" fill="#fff"/></svg>
<div class="cell" style="left:606px;top:441px;color:#fff">待拣货</div>
<div class="cell" style="left:704px;top:442px">已完成</div>
<div class="cell" style="left:784px;top:442px">默认仓库</div>
<div class="cell" style="left:1032px;top:442px">线下优惠券领取</div>
<svg class="a" style="left:1155px;top:444px" width="7" height="13" viewBox="0 0 7 13"><path d="M3.5 12V1M1 3.5L3.5 1 6 3.5" stroke="#5a82bb" stroke-width="1" fill="none"/></svg>
<div class="cell L" style="left:1188px;top:444px;width:100px;text-align:right;padding-right:14px">0</div>
<div class="cell L" style="left:1288px;top:444px;width:100px;text-align:right;padding-right:14px">29.83</div>
<div class="cell L" style="left:1388px;top:444px;width:100px;text-align:right;padding-right:14px">1</div>
<div class="cell L" style="left:1488px;top:444px;width:100px;text-align:right;padding-right:14px">0</div>
<div class="cell L" style="left:1588px;top:444px;width:110px;text-align:right;padding-right:14px">1</div>
<div class="a" style="left:0;top:465px;width:1800px;height:31px;background:#f5f5f5;border-bottom:1px solid #cfcfcf"></div>
<div class="cell L" style="left:7px;top:475px">16</div>
<div class="a" style="left:58px;top:473px;width:16px;height:16px;border:1px solid #8a8a8a;border-radius:2px;background:#fff"></div>
<div class="cell" style="left:130px;top:473px;color:#2f5d9e">生成拣货单</div>
<div class="cell L" style="left:239px;top:475px">2021-07-14</div>
<div class="cell L" style="left:384px;top:475px;color:#2f5d9e;text-decoration:underline">XSDD-20210714-005</div>
<svg class="a" style="left:592px;top:471px" width="79" height="17" viewBox="0 0 79 17"><path d="M8 0H79V17H8L0 8.5z" fill="#4dbde6"/><circle cx="8.5" cy="8.5" r="1.6" fill="#fff"/></svg>
<div class="cell" style="left:606px;top:472px;color:#fff">待拣货</div>
<div class="cell" style="left:704px;top:473px">已完成</div>
<div class="cell" style="left:784px;top:473px">zyy仓库</div>
<div class="cell" style="left:1032px;top:473px">张琴琴1</div>
<svg class="a" style="left:1155px;top:475px" width="7" height="13" viewBox="0 0 7 13"><path d="M3.5 12V1M1 3.5L3.5 1 6 3.5" stroke="#5a82bb" stroke-width="1" fill="none"/></svg>
<div class="cell L" style="left:1188px;top:475px;width:100px;text-align:right;padding-right:14px">0</div>
<div class="cell L" style="left:1288px;top:475px;width:100px;text-align:right;padding-right:14px">113.00</div>
<div class="cell L" style="left:1388px;top:475px;width:100px;text-align:right;padding-right:14px">1</div>
<div class="cell L" style="left:1488px;top:475px;width:100px;text-align:right;padding-right:14px">0</div>
<div class="cell L" style="left:1588px;top:475px;width:110px;text-align:right;padding-right:14px">1</div>
<div class="a" style="left:0;top:496px;width:1800px;height:31px;background:#fff;border-bottom:1px solid #cfcfcf"></div>
<div class="cell L" style="left:7px;top:506px">17</div>
<div class="a" style="left:58px;top:504px;width:16px;height:16px;border:1px solid #8a8a8a;border-radius:2px;background:#fff"></div>
<div class="cell" style="left:130px;top:504px;color:#2f5d9e">生成拣货单</div>
<div class="cell L" style="left:239px;top:506px">2021-07-14</div>
<div class="cell L" style="left:384px;top:506px;color:#2f5d9e;text-decoration:underline">XSDD-20210714-006</div>
<svg class="a" style="left:592px;top:502px" width="79" height="17" viewBox="0 0 79 17"><path d="M8 0H79V17H8L0 8.5z" fill="#4dbde6"/><circle cx="8.5" cy="8.5" r="1.6" fill="#fff"/></svg>
<div class="cell" style="left:606px;top:503px;color:#fff">待拣货</div>
<div class="cell" style="left:704px;top:504px">已完成</div>
<div class="cell" style="left:784px;top:504px">默认仓库</div>
<div class="cell" style="left:1032px;top:504px">张海明</div>
<svg class="a" style="left:1155px;top:506px" width="7" height="13" viewBox="0 0 7 13"><path d="M3.5 12V1M1 3.5L3.5 1 6 3.5" stroke="#5a82bb" stroke-width="1" fill="none"/></svg>
<div class="cell L" style="left:1188px;top:506px;width:100px;text-align:right;padding-right:14px">0</div>
<div class="cell L" style="left:1288px;top:506px;width:100px;text-align:right;padding-right:14px">29.83</div>
<div class="cell L" style="left:1388px;top:506px;width:100px;text-align:right;padding-right:14px">1</div>
<div class="cell L" style="left:1488px;top:506px;width:100px;text-align:right;padding-right:14px">0</div>
<div class="cell L" style="left:1588px;top:506px;width:110px;text-align:right;padding-right:14px">1</div>
<div class="a" style="left:0;top:527px;width:1800px;height:31px;background:#f5f5f5;border-bottom:1px solid #cfcfcf"></div>
<div class="cell L" style="left:7px;top:537px">18</div>
<div class="a" style="left:58px;top:535px;width:16px;height:16px;border:1px solid #8a8a8a;border-radius:2px;background:#fff"></div>
<div class="cell" style="left:130px;top:535px;color:#2f5d9e">生成拣货单</div>
<div class="cell L" style="left:239px;top:537px">2021-07-19</div>
<div class="cell L" style="left:384px;top:537px;color:#2f5d9e;text-decoration:underline">XSDD-20210719-011</div>
<svg class="a" style="left:592px;top:533px" width="79" height="17" viewBox="0 0 79 17"><path d="M8 0H79V17H8L0 8.5z" fill="#4dbde6"/><circle cx="8.5" cy="8.5" r="1.6" fill="#fff"/></svg>
<div class="cell" style="left:606px;top:534px;color:#fff">待拣货</div>
<div class="cell" style="left:704px;top:535px">已完成</div>
<div class="cell" style="left:784px;top:535px">默认仓库</div>
<div class="cell L" style="left:907px;top:537px">a1</div>
<div class="cell" style="left:1032px;top:535px">夏米的王甜甜</div>
<svg class="a" style="left:1155px;top:537px" width="7" height="13" viewBox="0 0 7 13"><path d="M3.5 12V1M1 3.5L3.5 1 6 3.5" stroke="#5a82bb" stroke-width="1" fill="none"/></svg>
<div class="cell L" style="left:1188px;top:537px;width:100px;text-align:right;padding-right:14px">0</div>
<div class="cell L" style="left:1288px;top:537px;width:100px;text-align:right;padding-right:14px">0.01</div>
<div class="cell L" style="left:1388px;top:537px;width:100px;text-align:right;padding-right:14px">1</div>
<div class="cell L" style="left:1488px;top:537px;width:100px;text-align:right;padding-right:14px">0</div>
<div class="cell L" style="left:1588px;top:537px;width:110px;text-align:right;padding-right:14px">1</div>
<div class="a" style="left:43px;top:0;width:1px;height:558px;background:#cfcfcf"></div>
<div class="a" style="left:87px;top:0;width:1px;height:558px;background:#cfcfcf"></div>
<div class="a" style="left:232px;top:0;width:1px;height:558px;background:#cfcfcf"></div>
<div class="a" style="left:377px;top:0;width:1px;height:558px;background:#cfcfcf"></div>
<div class="a" style="left:583px;top:0;width:1px;height:558px;background:#cfcfcf"></div>
<div class="a" style="left:697px;top:0;width:1px;height:558px;background:#cfcfcf"></div>
<div class="a" style="left:777px;top:0;width:1px;height:558px;background:#cfcfcf"></div>
<div class="a" style="left:900px;top:0;width:1px;height:558px;background:#cfcfcf"></div>
<div class="a" style="left:1025px;top:0;width:1px;height:558px;background:#cfcfcf"></div>
<div class="a" style="left:1148px;top:0;width:1px;height:558px;background:#cfcfcf"></div>
<div class="a" style="left:1188px;top:0;width:1px;height:558px;background:#cfcfcf"></div>
<div class="a" style="left:1288px;top:0;width:1px;height:558px;background:#cfcfcf"></div>
<div class="a" style="left:1388px;top:0;width:1px;height:558px;background:#cfcfcf"></div>
<div class="a" style="left:1488px;top:0;width:1px;height:558px;background:#cfcfcf"></div>
<div class="a" style="left:1588px;top:0;width:1px;height:558px;background:#cfcfcf"></div>
<div class="a" style="left:1698px;top:0;width:1px;height:558px;background:#cfcfcf"></div>
</div>
<div class="a" style="left:131px;top:279px;width:1px;height:607px;background:#cfcfcf"></div>
<div class="a" style="left:174px;top:247px;width:1px;height:31px;background:#cfcfcf"></div>
<div class="a" style="left:218px;top:247px;width:1px;height:31px;background:#cfcfcf"></div>
<div class="a" style="left:363px;top:247px;width:1px;height:31px;background:#cfcfcf"></div>
<div class="a" style="left:508px;top:247px;width:1px;height:31px;background:#cfcfcf"></div>
<div class="a" style="left:714px;top:247px;width:1px;height:31px;background:#cfcfcf"></div>
<div class="a" style="left:828px;top:247px;width:1px;height:31px;background:#cfcfcf"></div>
<div class="a" style="left:908px;top:247px;width:1px;height:31px;background:#cfcfcf"></div>
<div class="a" style="left:1031px;top:247px;width:1px;height:31px;background:#cfcfcf"></div>
<div class="a" style="left:1156px;top:247px;width:1px;height:31px;background:#cfcfcf"></div>
<div class="a" style="left:1279px;top:247px;width:1px;height:31px;background:#cfcfcf"></div>
<div class="a" style="left:1319px;top:247px;width:1px;height:31px;background:#cfcfcf"></div>
<div class="a" style="left:1419px;top:247px;width:1px;height:31px;background:#cfcfcf"></div>
<div class="a" style="left:1519px;top:247px;width:1px;height:31px;background:#cfcfcf"></div>
<div class="a" style="left:1619px;top:247px;width:1px;height:31px;background:#cfcfcf"></div>
<div class="a" style="left:1719px;top:247px;width:1px;height:31px;background:#cfcfcf"></div>
<div class="a" style="left:1829px;top:247px;width:1px;height:31px;background:#cfcfcf"></div>
<svg class="a" style="left:145px;top:256px" width="16" height="16" viewBox="0 0 24 24"><path d="M8.75 4.69 L9.46 1.81 L14.54 1.81 L15.25 4.69 L16.70 5.53 L19.55 4.71 L22.09 9.11 L19.96 11.16 L19.96 12.84 L22.09 14.89 L19.55 19.29 L16.70 18.47 L15.25 19.31 L14.54 22.19 L9.46 22.19 L8.75 19.31 L7.30 18.47 L4.45 19.29 L1.91 14.89 L4.04 12.84 L4.04 11.16 L1.91 9.11 L4.45 4.71 L7.30 5.53Z" fill="none" stroke="#8d98b5" stroke-width="1.5" stroke-linejoin="round"/><circle cx="12" cy="12" r="3.4" fill="none" stroke="#8d98b5" stroke-width="1.5"/></svg>
<div class="a" style="left:189px;top:255px;width:16px;height:16px;border:1px solid #8a8a8a;border-radius:2px;background:#fff"></div>
<div class="cell" style="left:218px;top:255px;width:145px;text-align:center;color:#333">操作</div>
<div class="cell" style="left:363px;top:255px;width:145px;text-align:center;color:#333">单据日期</div>
<svg class="si" style="left:491px;top:257px" width="14" height="12" viewBox="0 0 14 12"><path d="M4.5 11.5V.8M2 3.3L4.5 .8 7 3.3" stroke="#8b97ba" stroke-width="1.2" fill="none"/><path d="M10.5 .5v10.7M8 8.7l2.5 2.5 2.5-2.5" stroke="#8b97ba" stroke-width="1.2" fill="none"/></svg>
<div class="cell" style="left:508px;top:255px;width:206px;text-align:center;color:#333">单据编号</div>
<svg class="si" style="left:697px;top:257px" width="14" height="12" viewBox="0 0 14 12"><path d="M4.5 11.5V.8M2 3.3L4.5 .8 7 3.3" stroke="#8b97ba" stroke-width="1.2" fill="none"/><path d="M10.5 .5v10.7M8 8.7l2.5 2.5 2.5-2.5" stroke="#8b97ba" stroke-width="1.2" fill="none"/></svg>
<div class="cell" style="left:714px;top:255px;width:114px;text-align:center;color:#333">单据状态</div>
<div class="cell" style="left:828px;top:255px;width:80px;text-align:center;color:#333">结算状态</div>
<div class="cell" style="left:908px;top:255px;width:123px;text-align:center;color:#333">发货仓库</div>
<svg class="si" style="left:1014px;top:257px" width="14" height="12" viewBox="0 0 14 12"><path d="M4.5 11.5V.8M2 3.3L4.5 .8 7 3.3" stroke="#8b97ba" stroke-width="1.2" fill="none"/><path d="M10.5 .5v10.7M8 8.7l2.5 2.5 2.5-2.5" stroke="#8b97ba" stroke-width="1.2" fill="none"/></svg>
<div class="cell" style="left:1031px;top:255px;width:125px;text-align:center;color:#333">集货位</div>
<svg class="si" style="left:1139px;top:257px" width="14" height="12" viewBox="0 0 14 12"><path d="M4.5 11.5V.8M2 3.3L4.5 .8 7 3.3" stroke="#8b97ba" stroke-width="1.2" fill="none"/><path d="M10.5 .5v10.7M8 8.7l2.5 2.5 2.5-2.5" stroke="#8b97ba" stroke-width="1.2" fill="none"/></svg>
<div class="cell" style="left:1156px;top:255px;width:123px;text-align:center;color:#333">往来单位</div>
<svg class="si" style="left:1262px;top:257px" width="14" height="12" viewBox="0 0 14 12"><path d="M4.5 11.5V.8M2 3.3L4.5 .8 7 3.3" stroke="#8b97ba" stroke-width="1.2" fill="none"/><path d="M10.5 .5v10.7M8 8.7l2.5 2.5 2.5-2.5" stroke="#8b97ba" stroke-width="1.2" fill="none"/></svg>
<div class="cell" style="left:1279px;top:255px;width:40px;text-align:center;color:#333">排序</div>
<div class="cell" style="left:1342px;top:255px">排序值</div>
<svg class="a" style="left:1383px;top:255px" width="14" height="14" viewBox="0 0 14 14"><circle cx="7" cy="7" r="6.5" fill="#7d8cb0"/><text x="7" y="11" font-size="10" font-weight="bold" text-anchor="middle" fill="#fff" font-family="Liberation Sans">?</text></svg>
<svg class="si" style="left:1401px;top:257px" width="14" height="12" viewBox="0 0 14 12"><path d="M4.5 11.5V.8M2 3.3L4.5 .8 7 3.3" stroke="#8b97ba" stroke-width="1.2" fill="none"/><path d="M10.5 .5v10.7M8 8.7l2.5 2.5 2.5-2.5" stroke="#8b97ba" stroke-width="1.2" fill="none"/></svg>
<div class="cell" style="left:1446px;top:255px">销售金额</div>
<svg class="si" style="left:1502px;top:257px" width="14" height="12" viewBox="0 0 14 12"><path d="M4.5 11.5V.8M2 3.3L4.5 .8 7 3.3" stroke="#8b97ba" stroke-width="1.2" fill="none"/><path d="M10.5 .5v10.7M8 8.7l2.5 2.5 2.5-2.5" stroke="#8b97ba" stroke-width="1.2" fill="none"/></svg>
<div class="cell" style="left:1546px;top:255px">订单数量</div>
<svg class="si" style="left:1602px;top:257px" width="14" height="12" viewBox="0 0 14 12"><path d="M4.5 11.5V.8M2 3.3L4.5 .8 7 3.3" stroke="#8b97ba" stroke-width="1.2" fill="none"/><path d="M10.5 .5v10.7M8 8.7l2.5 2.5 2.5-2.5" stroke="#8b97ba" stroke-width="1.2" fill="none"/></svg>
<div class="cell" style="left:1640px;top:255px">已拣货数量</div>
<svg class="si" style="left:1702px;top:257px" width="14" height="12" viewBox="0 0 14 12"><path d="M4.5 11.5V.8M2 3.3L4.5 .8 7 3.3" stroke="#8b97ba" stroke-width="1.2" fill="none"/><path d="M10.5 .5v10.7M8 8.7l2.5 2.5 2.5-2.5" stroke="#8b97ba" stroke-width="1.2" fill="none"/></svg>
<div class="cell" style="left:1745px;top:255px">未拣货数量</div>
<svg class="si" style="left:1812px;top:257px" width="14" height="12" viewBox="0 0 14 12"><path d="M4.5 11.5V.8M2 3.3L4.5 .8 7 3.3" stroke="#8b97ba" stroke-width="1.2" fill="none"/><path d="M10.5 .5v10.7M8 8.7l2.5 2.5 2.5-2.5" stroke="#8b97ba" stroke-width="1.2" fill="none"/></svg>
<div class="cell" style="left:1850px;top:255px;width:28px">已发货</div>
<div class="a" style="left:1878px;top:247px;width:17px;height:31px;background:#e6e6e6"></div>
<div class="a" style="left:1878px;top:279px;width:17px;height:558px;background:#f1f1f1"></div>
<div class="a" style="left:1880px;top:296px;width:13px;height:473px;background:#c1c1c1"></div>
<svg class="a" style="left:1882px;top:285px" width="9" height="5" viewBox="0 0 9 5"><path d="M0 5h9L4.5 0z" fill="#a3a3a3"/></svg>
<svg class="a" style="left:1882px;top:826px" width="9" height="5" viewBox="0 0 9 5"><path d="M0 0h9L4.5 5z" fill="#505050"/></svg>
<div class="a" style="left:132px;top:837px;width:1763px;height:18px;background:#f1f1f1"></div>
<div class="a" style="left:732px;top:840px;width:521px;height:13px;background:#c1c1c1"></div>
<svg class="a" style="left:720px;top:842px" width="5" height="9" viewBox="0 0 5 9"><path d="M5 0v9L0 4.5z" fill="#a3a3a3"/></svg>
<svg class="a" style="left:1866px;top:842px" width="5" height="9" viewBox="0 0 5 9"><path d="M0 0v9l5-4.5z" fill="#505050"/></svg>
<div class="a" style="left:1895px;top:246px;width:1px;height:641px;background:#cfcfcf"></div>
<div class="a" style="left:131px;top:855px;width:1765px;height:33px;background:#f5f5f5;border:1px solid #d5dae2;border-top:1px solid #dde2ea"></div>
<div class="a" style="left:174px;top:856px;width:1px;height:30px;background:#cfcfcf"></div>
<div class="a" style="left:218px;top:856px;width:1px;height:30px;background:#cfcfcf"></div>
<div class="a" style="left:363px;top:856px;width:1px;height:30px;background:#cfcfcf"></div>
<div class="a" style="left:508px;top:856px;width:1px;height:30px;background:#cfcfcf"></div>
<div class="a" style="left:714px;top:856px;width:1px;height:30px;background:#cfcfcf"></div>
<div class="a" style="left:828px;top:856px;width:1px;height:30px;background:#cfcfcf"></div>
<div class="a" style="left:908px;top:856px;width:1px;height:30px;background:#cfcfcf"></div>
<div class="a" style="left:1031px;top:856px;width:1px;height:30px;background:#cfcfcf"></div>
<div class="a" style="left:1156px;top:856px;width:1px;height:30px;background:#cfcfcf"></div>
<div class="a" style="left:1279px;top:856px;width:1px;height:30px;background:#cfcfcf"></div>
<div class="a" style="left:1319px;top:856px;width:1px;height:30px;background:#cfcfcf"></div>
<div class="a" style="left:1419px;top:856px;width:1px;height:30px;background:#cfcfcf"></div>
<div class="a" style="left:1519px;top:856px;width:1px;height:30px;background:#cfcfcf"></div>
<div class="a" style="left:1619px;top:856px;width:1px;height:30px;background:#cfcfcf"></div>
<div class="a" style="left:1719px;top:856px;width:1px;height:30px;background:#cfcfcf"></div>
<div class="a" style="left:1829px;top:856px;width:1px;height:30px;background:#cfcfcf"></div>
<div class="cell" style="left:138px;top:864px;font-weight:bold;color:#333">合计</div>
<div class="cell" style="left:1420px;top:865px;width:99px;font-weight:bold;color:#f2704a;text-align:left;padding-left:6px;letter-spacing:0.3px">7,419,634,597.53</div>
<div class="cell L" style="left:1519px;top:865px;width:86px;text-align:right;font-weight:bold;color:#f2704a">6017</div>
<div class="cell L" style="left:1619px;top:865px;width:86px;text-align:right;font-weight:bold;color:#f2704a">5</div>
<div class="cell L" style="left:1729px;top:865px;width:86px;text-align:right;font-weight:bold;color:#f2704a">6013</div>
<div class="a" style="left:674px;top:894px;width:45px;height:22px;border:1px solid #ddd;border-radius:2px;font-size:12px;line-height:20px;color:#888;text-align:center">首页</div>
<div class="a" style="left:724px;top:894px;width:55px;height:22px;border:1px solid #ddd;border-radius:2px;font-size:12px;line-height:20px;color:#888;text-align:center">&nbsp;&nbsp;上页</div>
<svg class="a" style="left:733px;top:901px" width="5" height="8" viewBox="0 0 5 8"><path d="M5 0v8L0 4z" fill="#777"/></svg>
<div class="a" style="left:791px;top:897px;font-size:12px;color:#333">第 <span style="color:#5b8ac9">(1/5)</span> 页</div>
<div class="a" style="left:862px;top:894px;width:55px;height:22px;border:1px solid #ddd;border-radius:2px;font-size:12px;line-height:20px;color:#333;text-align:center">下页&nbsp;&nbsp;</div>
<svg class="a" style="left:902px;top:901px" width="5" height="8" viewBox="0 0 5 8"><path d="M0 0v8l5-4z" fill="#5b8ac9"/></svg>
<div class="a" style="left:922px;top:894px;width:45px;height:22px;border:1px solid #ddd;border-radius:2px;font-size:12px;line-height:20px;color:#333;text-align:center">尾页</div>
<div class="a" style="left:1009px;top:897px;font-size:12px;color:#333">跳转到</div>
<div class="a" style="left:1049px;top:895px;width:24px;height:20px;border:1px solid #ccc;font-size:12px;line-height:18px;padding-left:2px">1</div>
<div class="a" style="left:1077px;top:897px;font-size:12px;color:#333">页</div>
<div class="a" style="left:1095px;top:895px;width:35px;height:20px;background:#5b7088;border-radius:4px;color:#fff;font-size:12px;line-height:20px;text-align:center">跳转</div>
<div class="a" style="left:1179px;top:897px;font-size:12px;color:#333">共 <span style="color:#5b8ac9">84</span> 条记录</div>
<div class="a" style="left:1260px;top:897px;font-size:12px;color:#333">每页显示</div>
<div class="a" style="left:1313px;top:895px;width:23px;height:20px;border:1px solid #ccc;font-size:12px;line-height:18px;padding-left:2px;color:#5b8ac9">20</div>
<div class="a" style="left:1342px;top:897px;font-size:12px;color:#333">行</div>
<div class="a" style="left:1909px;top:236px;width:11px;height:686px;background:#ebebeb"></div>
<svg class="a" style="left:1908px;top:764px" width="12" height="58" viewBox="0 0 12 58"><rect x="3.5" y="1" width="5" height="48" rx="2.5" fill="#5a6573"/><rect x="5" y="28" width="2" height="20" fill="#3bb4e5"/><circle cx="6" cy="50" r="5" fill="#3bb4e5" stroke="#5a6573" stroke-width="1.5"/></svg>
</body></html>
